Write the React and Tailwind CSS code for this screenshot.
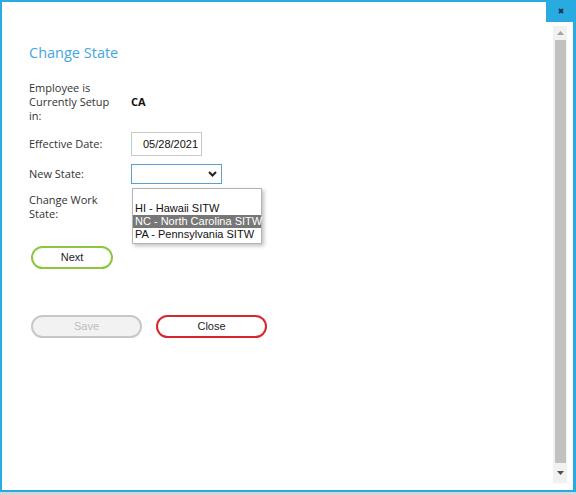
const label = "font-['Open_Sans',sans-serif] text-[11px] leading-[14px] text-[#333]";
const arial = "font-['Liberation_Sans',Arial,sans-serif] text-[11px]";

function Scrollbar() {
    return (
        <div className="mt-[24px] mr-[6px] w-[14px] h-[457px] bg-[#f1f1f1] flex flex-col items-center">
            <div className="h-[14px] w-full flex items-center justify-center">
                <svg width="7" height="4" viewBox="0 0 7 4">
                    <path d="M3.5 0 L7 4 L0 4 Z" fill="#a3a3a3" />
                </svg>
            </div>
            <div className="flex-1 w-[11px] bg-[#c1c1c1]" />
            <div className="h-[20px] w-full flex items-center justify-center">
                <svg width="7" height="4" viewBox="0 0 7 4">
                    <path d="M0 0 L7 0 L3.5 4 Z" fill="#505050" />
                </svg>
            </div>
        </div>
    );
}

export default function App() {
    const options = [
        { code: '', text: '' },
        { code: 'HI', text: 'HI - Hawaii SITW' },
        { code: 'NC', text: 'NC - North Carolina SITW', active: true },
        { code: 'PA', text: 'PA - Pennsylvania SITW' },
    ];

    return (
        <div className="w-[576px] h-[495px] bg-[#d6d6d6] flex flex-col">
            <div className="relative h-[492px] bg-white border-t-2 border-l-2 border-b-2 border-r-[3px] border-[#29abe2] flex">
                {/* window close */}
                <button className="absolute -top-[2px] -right-[3px] w-[30px] h-[22px] bg-[#29abe2] flex items-center justify-center">
                    <svg width="6" height="6" viewBox="0 0 6 6">
                        <path d="M1 1 L5 5 M5 1 L1 5" stroke="#17364a" strokeWidth="1.8" />
                    </svg>
                </button>

                <div className="flex-1 pl-[27px] pt-[41px]">
                    <h1 className="font-['Open_Sans',sans-serif] text-[14.5px] leading-[20px] text-[#45a6df]">
                        Change State
                    </h1>

                    <div className="mt-[18px] grid grid-cols-[102px_auto] items-center">
                        <div className={`${label} w-[90px]`}>Employee is Currently Setup in:</div>
                        <div className="font-['Open_Sans',sans-serif] text-[11px] font-bold text-[#111]">CA</div>
                    </div>

                    <div className="mt-[9px] grid grid-cols-[102px_auto] items-center">
                        <div className={label}>Effective Date:</div>
                        <div className={`${arial} w-[71px] h-[24px] border border-[#c9c9c9] pl-[11px] flex items-center text-[#111]`}>
                            05/28/2021
                        </div>
                    </div>

                    <div className="mt-[8px] grid grid-cols-[102px_auto] items-center">
                        <div className={label}>New State:</div>
                        <div className="relative w-[91px] h-[20px] border border-[#5b9fd6] flex items-center justify-end pr-[4px]">
                            <svg width="9" height="6" viewBox="0 0 9 6">
                                <path d="M1 1 L4.5 4.5 L8 1" fill="none" stroke="#222" strokeWidth="2" />
                            </svg>
                            <ul className={`${arial} absolute top-[23px] left-0 w-[130px] bg-white border border-[#b5b5b5] pb-[2px] shadow-[2px_2px_4px_rgba(0,0,0,0.25)] z-10`}>
                                {options.map((o) => (
                                    <li
                                        key={o.code || 'blank'}
                                        className={`h-[13px] leading-[13px] pl-[2px] whitespace-nowrap ${o.active ? 'bg-[#777] text-white' : 'text-[#111]'}`}
                                    >
                                        {o.text}
                                    </li>
                                ))}
                            </ul>
                        </div>
                    </div>

                    <div className="mt-[9px] grid grid-cols-[102px_auto]">
                        <div className={`${label} w-[90px]`}>Change Work State:</div>
                        <div />
                    </div>

                    <button className={`${arial} mt-[25px] ml-[2px] w-[82px] h-[23px] rounded-full border-2 border-[#8cc63f] text-[#222] flex items-center justify-center`}>
                        Next
                    </button>

                    <div className="mt-[46px] ml-[2px] flex gap-[14px]">
                        <button className={`${arial} w-[111px] h-[23px] rounded-full border-2 border-[#c8c8c8] bg-[#f2f2f2] text-[#bdbdbd] flex items-center justify-center`}>
                            Save
                        </button>
                        <button className={`${arial} w-[111px] h-[23px] rounded-full border-2 border-[#d7262e] text-[#222] flex items-center justify-center`}>
                            Close
                        </button>
                    </div>
                </div>

                <Scrollbar />
            </div>
        </div>
    );
}
